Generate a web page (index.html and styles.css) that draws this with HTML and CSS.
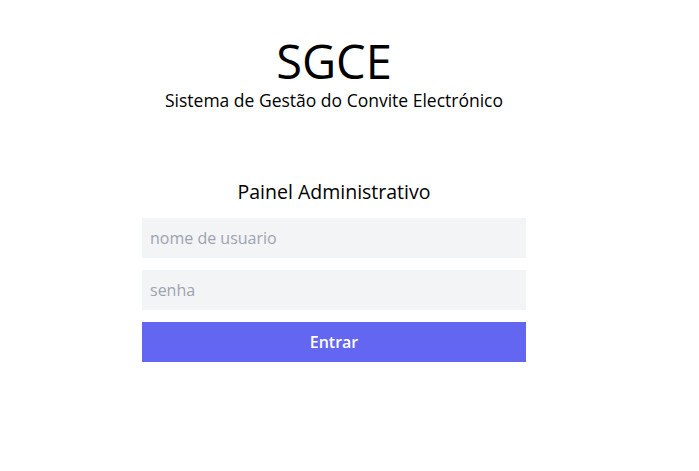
FILE: index.html
```html
<!DOCTYPE html>
<html lang="pt">
<head>
<meta charset="utf-8">
<title>SGCE</title>
<link rel="stylesheet" href="styles.css">
</head>
<body>
<main class="page">
  <header class="brand">
    <h1 class="brand-title">SGCE</h1>
    <p class="brand-sub">Sistema de Gestão do Convite Electrónico</p>
  </header>
  <form class="login">
    <h2 class="login-title">Painel Administrativo</h2>
    <input class="field" type="text" placeholder="nome de usuario">
    <input class="field" type="password" placeholder="senha">
    <button class="btn" type="button">Entrar</button>
  </form>
</main>
</body>
</html>
```
FILE: styles.css
```css
* { box-sizing: border-box; }
html, body { margin: 0; background: #fff; }
body {
  font-family: "Open Sans", "Noto Sans", sans-serif;
  color: #000;
  padding-right: 31px;
}
.page {
  display: flex;
  flex-direction: column;
  align-items: center;
}
.brand {
  display: flex;
  flex-direction: column;
  align-items: center;
  padding-top: 34px;
}
.brand-title {
  margin: 0;
  font-family: "Open Sans", sans-serif;
  font-weight: 400;
  font-size: 47px;
  line-height: 54px;
}
.brand-sub {
  margin: 0;
  font-size: 17.5px;
  line-height: 24px;
}
.login {
  display: flex;
  flex-direction: column;
  align-items: center;
  gap: 12px;
  width: 384px;
  margin-top: 66px;
}
.login-title {
  margin: 0;
  font-weight: 400;
  font-size: 19.5px;
  line-height: 28px;
}
.field {
  width: 100%;
  height: 40px;
  border: 0;
  background: #f3f4f6;
  padding: 0 8px;
  font-family: inherit;
  font-size: 16px;
  color: #111827;
  outline: none;
}
.field::placeholder { color: #9ca3af; }
.btn {
  width: 100%;
  height: 40px;
  border: 0;
  background: #6366f1;
  color: #fff;
  font-family: inherit;
  font-size: 16px;
  font-weight: 600;
}
```
